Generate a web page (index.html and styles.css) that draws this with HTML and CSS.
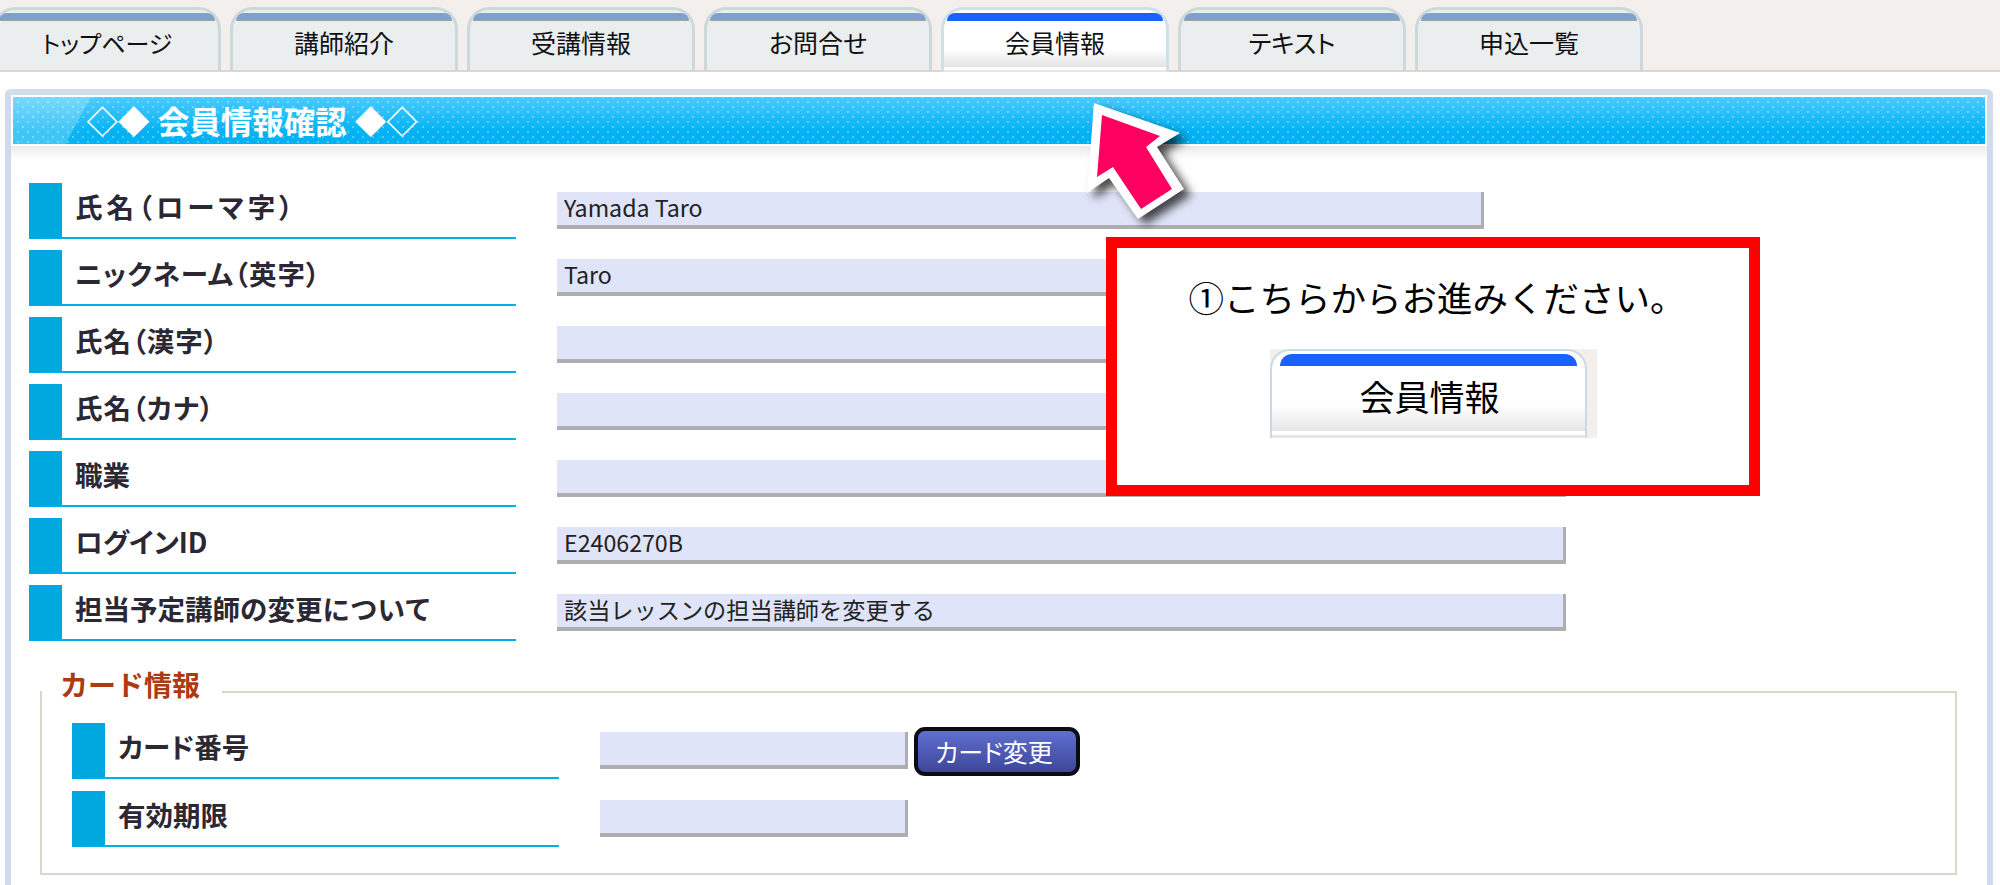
FILE: index.html
```html
<!DOCTYPE html>
<html lang="ja">
<head>
    <meta charset="UTF-8">
    <title>会員情報確認</title>
    <link rel="stylesheet" href="styles.css">
</head>
<body>
    <nav class="tabs">
        <a class="tab"><span class="tab-bar"></span><span class="tab-label">トップページ</span></a>
        <a class="tab"><span class="tab-bar"></span><span class="tab-label">講師紹介</span></a>
        <a class="tab"><span class="tab-bar"></span><span class="tab-label">受講情報</span></a>
        <a class="tab"><span class="tab-bar"></span><span class="tab-label">お問合せ</span></a>
        <a class="tab active"><span class="tab-bar"></span><span class="tab-label">会員情報</span></a>
        <a class="tab"><span class="tab-bar"></span><span class="tab-label">テキスト</span></a>
        <a class="tab"><span class="tab-bar"></span><span class="tab-label">申込一覧</span></a>
    </nav>

    <div class="panel">
        <h1 class="panel-title">◇◆ 会員情報確認 ◆◇</h1>
        <div class="panel-shade"></div>

        <div class="rows">
            <div class="row">
                <div class="row-label roman">氏名（ローマ字）</div>
                <div class="row-value short">Yamada Taro</div>
            </div>
            <div class="row">
                <div class="row-label paren">ニックネーム（英字）</div>
                <div class="row-value">Taro</div>
            </div>
            <div class="row">
                <div class="row-label paren">氏名（漢字）</div>
                <div class="row-value"></div>
            </div>
            <div class="row">
                <div class="row-label paren">氏名（カナ）</div>
                <div class="row-value"></div>
            </div>
            <div class="row">
                <div class="row-label">職業</div>
                <div class="row-value"></div>
            </div>
            <div class="row">
                <div class="row-label">ログインID</div>
                <div class="row-value">E2406270B</div>
            </div>
            <div class="row">
                <div class="row-label wide">担当予定講師の変更について</div>
                <div class="row-value">該当レッスンの担当講師を変更する</div>
            </div>
        </div>

        <fieldset class="card-box">
            <legend>カード情報</legend>
            <div class="row">
                <div class="row-label">カード番号</div>
                <div class="row-value card"></div>
                <button class="card-btn">カード変更</button>
            </div>
            <div class="row">
                <div class="row-label">有効期限</div>
                <div class="row-value card"></div>
            </div>
        </fieldset>
    </div>

    <!-- arrow pointing at the tab -->
    <svg class="arrow" viewBox="1080 95 115 130" width="115" height="130">
        <polygon points="1094,103 1180,133 1157,147 1184,189 1138,219 1109,178 1087,193" fill="#ffffff"/>
        <polygon points="1102,115 1160,136 1146,147 1172,189 1141,209 1113,167 1097,177" fill="#ff0060"/>
    </svg>

    <div class="callout">
        <p class="callout-text">①こちらからお進みください。</p>
        <div class="mini-tab">
            <div class="mini-face">
                <span class="mini-bar"></span>
                <span class="mini-label">会員情報</span>
            </div>
        </div>
    </div>
</body>
</html>
```

FILE: styles.css
```css
html, body {
    margin: 0;
    height: 885px;
    overflow: hidden;
    background-color: #ffffff;
}
body {
    font-family: "Noto Sans CJK JP", sans-serif;
    color: #111111;
    font-feature-settings: "palt";
}

/* tabs */
.tabs {
    display: flex;
    gap: 9px;
    height: 63px;
    padding-top: 7px;
    margin-left: -7px;
    background-color: #f3efec;
    border-bottom: 2px solid #e0d6cb;
}
.tab {
    box-sizing: border-box;
    width: 228px;
    height: 63px;
    display: flex;
    flex-direction: column;
    border: 3px solid #cdd8da;
    border-bottom: none;
    border-radius: 22px 22px 0 0;
    background-color: #eaeeef;
}
.tab-bar {
    height: 7px;
    margin: 3px 3px 0;
    background-color: #80a0d2;
    border-bottom: 1px solid #a3a3a3;
    border-radius: 14px 14px 0 0;
}
.tab-label {
    flex: 1;
    display: flex;
    align-items: center;
    justify-content: center;
    padding-bottom: 6px;
    font-size: 25px;
    line-height: 1;
}
.tab:first-child .tab-label {
    font-size: 24px;
}
.tab.active {
    height: 65px;
    margin-bottom: -2px;
    border-color: #cfe0ea;
    background: linear-gradient(#ffffff 62%, #e4e4e4 92%, #ffffff 92%, #ffffff 97%, #e6e6e6 97%);
}
.tab.active .tab-bar {
    background-color: #1a62ff;
    border-bottom: none;
    height: 8px;
}
.tab.active .tab-label {
    padding-bottom: 8px;
}

/* panel */
.panel {
    box-sizing: border-box;
    height: 900px;
    margin: 17px 7px 0 4.5px;
    border: 6px solid #cfdbec;
    border-top-color: #cfdfe8;
    border-bottom: none;
    border-radius: 6px 6px 0 0;
}
.panel-title {
    margin: 0 2px;
    height: 47px;
    border-top: 2px solid #ffffff;
    border-bottom: 2px solid #ffffff;
    padding-left: 74px;
    font-size: 31.5px;
    word-spacing: 1px;
    line-height: 46px;
    font-weight: 700;
    font-feature-settings: normal;
    color: #ffffff;
    background-color: #00b0f0;
    background-image:
        linear-gradient(118deg, rgba(255, 255, 255, 0.25) 68px, rgba(255, 255, 255, 0.04) 69px, rgba(255, 255, 255, 0) 100px),
        radial-gradient(circle, rgba(255, 255, 255, 0.32) 1.2px, transparent 1.5px),
        radial-gradient(circle, rgba(255, 255, 255, 0.32) 1.2px, transparent 1.5px),
        linear-gradient(#4ccaff, #00b2f4 75%);
    background-size: 100% 100%, 10px 10px, 10px 10px, 100% 100%;
    background-position: 0 0, 0 0, 5px 5px, 0 0;
}
.panel-shade {
    height: 14px;
    background: linear-gradient(#ebebeb, #ffffff);
}
.rows {
    display: flex;
    flex-direction: column;
    gap: 11px;
    margin: 23px 0 0 18.5px;
}
.row {
    display: flex;
    align-items: flex-start;
    height: 56px;
}
.row-label {
    box-sizing: border-box;
    width: 487px;
    height: 56px;
    flex-shrink: 0;
    padding: 7px 0 0 13px;
    border-left: 33px solid #00a8e0;
    border-bottom: 2px solid #00aee8;
    font-size: 27.5px;
    line-height: 32px;
    font-weight: 700;
    color: #2b2733;
}
.row-label.wide {
    font-feature-settings: normal;
}
.row-label.paren {
    letter-spacing: 1px;
}
.row-label.roman {
    letter-spacing: 4px;
}
.row-value {
    box-sizing: border-box;
    width: 1009px;
    height: 37px;
    margin: 9px 0 0 41px;
    padding-left: 7px;
    background-color: #e0e4f8;
    border-right: 3px solid #adadb2;
    border-bottom: 4px solid #adadb2;
    font-size: 23.2px;
    line-height: 30px;
    color: #222222;
    font-feature-settings: normal;
}
.row-value.short {
    width: 927px;
}

/* card box */
.card-box {
    box-sizing: border-box;
    width: 1917px;
    height: 210px;
    margin: 24px 0 0 29.5px;
    padding: 0 0 0 30px;
    border: 2px solid #ddd5c9;
}
.card-box legend {
    margin-left: -30px;
    padding: 0 22px 16px 18px;
    font-size: 28px;
    line-height: 38px;
    font-weight: 700;
    font-feature-settings: normal;
    color: #ad3a10;
}
.card-box .row {
    margin-top: 12px;
}
.card-box legend + .row {
    margin-top: 4px;
}
.row-value.card {
    width: 308px;
}
.card-btn {
    box-sizing: border-box;
    width: 166px;
    height: 49px;
    margin: 4px 0 0 6px;
    border: 4px solid #0b0b14;
    border-radius: 11px;
    background: linear-gradient(#5f6fd0, #3d4699);
    color: #ffffff;
    font-family: "Noto Sans CJK JP", sans-serif;
    font-feature-settings: "palt";
    font-size: 25px;
    line-height: 1;
    padding: 0 6px 0 0;
}

/* overlays */
.arrow {
    position: absolute;
    left: 1080px;
    top: 95px;
    filter: drop-shadow(7px 6px 5px rgba(0, 0, 0, 0.7));
}
.callout {
    position: absolute;
    left: 1106px;
    top: 237px;
    box-sizing: border-box;
    width: 654px;
    height: 259px;
    border: 11px solid #ff0000;
    background-color: #ffffff;
    display: flex;
    flex-direction: column;
    align-items: center;
}
.callout-text {
    margin: 24px 0 27px;
    padding-left: 8px;
    font-size: 35.5px;
    line-height: 50px;
    color: #000000;
    font-feature-settings: normal;
}
.mini-tab {
    width: 327px;
    height: 89px;
    flex-shrink: 0;
    background-color: #f3efec;
}
.mini-face {
    box-sizing: border-box;
    width: 317px;
    height: 89px;
    display: flex;
    flex-direction: column;
    border: 2px solid #c9dce6;
    border-bottom: none;
    border-radius: 20px 20px 0 0;
    background: linear-gradient(#ffffff 62%, #e6e6e6 92%, #ffffff 92%, #ffffff 97%, #e6e6e6 97%);
}
.mini-bar {
    height: 12px;
    margin: 3px 8px 0;
    background-color: #1a62ff;
    border-radius: 12px 12px 0 0;
}
.mini-label {
    flex: 1;
    display: flex;
    align-items: center;
    justify-content: center;
    padding: 0 0 14px 3px;
    font-size: 35px;
    line-height: 1;
    color: #000000;
}
```
